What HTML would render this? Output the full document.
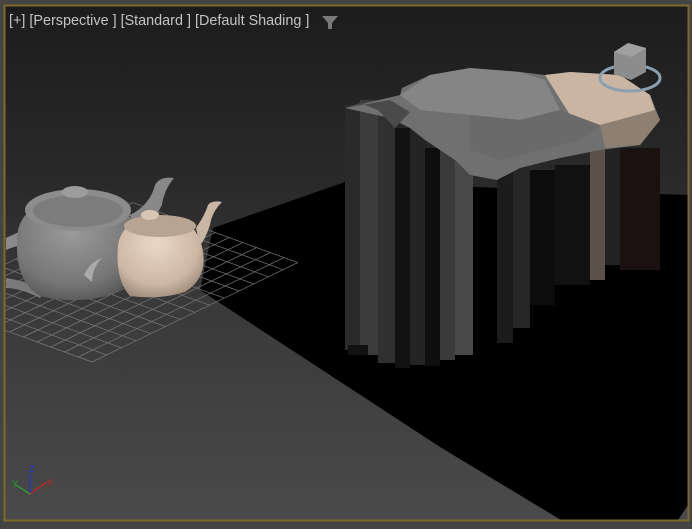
<!DOCTYPE html>
<html><head><meta charset="utf-8"><style>
html,body{margin:0;padding:0;background:#444;}
body{width:692px;height:529px;position:relative;overflow:hidden;font-family:"Liberation Sans",sans-serif;}
svg{position:absolute;left:0;top:0;}
.lbl{position:absolute;left:9px;top:13px;font-size:14.4px;color:#c4c4c4;white-space:pre;}
</style></head><body>
<svg width="692" height="529" viewBox="0 0 692 529">
<defs>
<linearGradient id="bg" x1="0" y1="0" x2="0" y2="1">
<stop offset="0" stop-color="#1c1c1c"/><stop offset="0.35" stop-color="#2a2a2a"/><stop offset="0.55" stop-color="#383838"/><stop offset="1" stop-color="#4a4a4a"/>
</linearGradient>
<radialGradient id="gt" cx="0.45" cy="0.35" r="0.7"><stop offset="0" stop-color="#9a9a9a"/><stop offset="0.7" stop-color="#777"/><stop offset="1" stop-color="#555"/></radialGradient>
<radialGradient id="bt" cx="0.45" cy="0.35" r="0.7"><stop offset="0" stop-color="#ead8c6"/><stop offset="0.7" stop-color="#cdb7a4"/><stop offset="1" stop-color="#9a8878"/></radialGradient>
</defs>
<rect x="0" y="0" width="692" height="529" fill="#444"/>
<rect x="4" y="5" width="685" height="516" fill="url(#bg)"/>
<polygon points="200,290 213,228 345,182 688,195 688,505 678,520 561,520 440,447" fill="#000"/>
<g transform="matrix(14.7,-7.1,-13.75,-5,92,362)" stroke="#777" stroke-width="0.7" fill="none">
<path vector-effect="non-scaling-stroke" d="M0 0H14M0 1H14M0 2H14M0 3H14M0 4H14M0 5H14M0 6H14M0 7H14M0 8H14M0 9H14M0 10H14M0 11H14M0 12H14M0 0V12M1 0V12M2 0V12M3 0V12M4 0V12M5 0V12M6 0V12M7 0V12M8 0V12M9 0V12M10 0V12M11 0V12M12 0V12M13 0V12M14 0V12"/>
</g>
<rect x="0" y="0" width="5" height="529" fill="#444"/>
<path d="M6 238 Q30 226 40 228 L40 242 Q20 244 6 250Z" fill="#8a8a8a"/>
<path d="M6 278 Q30 282 45 290 L40 298 Q20 288 6 288Z" fill="#7a7a7a"/>
<path d="M130 215 Q150 205 155 185 Q160 176 174 178 Q164 190 162 205 Q152 225 135 232Z" fill="#888"/>
<path d="M18 230 Q25 200 75 195 Q130 198 138 235 Q145 280 110 295 Q75 305 40 296 Q12 280 18 230Z" fill="url(#gt)"/>
<ellipse cx="78" cy="210" rx="53" ry="21" fill="#8c8c8c"/>
<ellipse cx="78" cy="211" rx="45" ry="16" fill="#7c7c7c"/>
<ellipse cx="75" cy="192" rx="13" ry="6" fill="#9c9c9c"/>
<path d="M84 275 Q90 262 102 258 Q92 268 92 282Z" fill="#aaa"/>
<path d="M196 228 Q205 215 208 205 Q212 200 222 202 Q212 212 210 225 Q205 240 200 245Z" fill="#c8b5a3"/>
<path d="M118 245 Q122 220 155 215 Q190 215 200 240 Q212 275 185 292 Q160 300 130 296 Q115 280 118 245Z" fill="url(#bt)"/>
<ellipse cx="160" cy="226" rx="36" ry="11" fill="#b8a492"/>
<ellipse cx="150" cy="215" rx="9" ry="5" fill="#d8c6b4"/>
<g>
<rect x="345" y="105" width="15" height="245" fill="#2a2a2a"/>
<rect x="360" y="100" width="18" height="255" fill="#3c3c3c"/>
<rect x="378" y="105" width="17" height="258" fill="#303030"/>
<rect x="395" y="128" width="15" height="240" fill="#121212"/>
<rect x="410" y="130" width="15" height="235" fill="#242424"/>
<rect x="425" y="148" width="15" height="218" fill="#0e0e0e"/>
<rect x="440" y="150" width="15" height="210" fill="#3a3a3a"/>
<rect x="455" y="160" width="18" height="195" fill="#484848"/>
<rect x="497" y="165" width="16" height="178" fill="#1c1c1c"/>
<rect x="513" y="168" width="17" height="160" fill="#262626"/>
<rect x="530" y="170" width="25" height="135" fill="#0c0c0c"/>
<rect x="555" y="165" width="35" height="120" fill="#111"/>
<rect x="590" y="140" width="15" height="140" fill="#5a5249"/>
<rect x="605" y="140" width="15" height="125" fill="#222"/>
<rect x="620" y="148" width="40" height="122" fill="#1a1111"/>
<rect x="348" y="345" width="20" height="10" fill="#111"/>
</g>
<polygon points="345,108 400,95 402,88 430,75 470,68 520,72 545,75 570,72 620,75 650,95 660,120 640,145 600,150 560,158 520,168 497,180 470,175 455,160 440,150 425,140 410,128 390,118" fill="#707070"/>
<polygon points="400,95 430,75 470,68 520,72 545,80 560,110 520,120 470,115 420,110" fill="#858585"/>
<polygon points="545,75 570,72 620,75 650,95 655,110 625,120 600,125 570,115" fill="#c9b5a1"/>
<polygon points="600,125 655,110 660,120 640,145 605,148" fill="#8e8070"/>
<polygon points="470,115 520,120 560,110 600,125 580,140 540,150 500,160 470,150" fill="#6a6a6a"/>
<polygon points="345,108 390,100 410,112 395,128 378,110 360,103" fill="#4a4a4a"/>
<ellipse cx="630" cy="78" rx="30" ry="13" fill="none" stroke="#8aa0b0" stroke-width="3"/>
<polygon points="614,52 628,43 646,48 646,72 631,80 614,74" fill="#8c8c8c"/>
<polygon points="614,52 628,43 646,48 632,57" fill="#a0a0a0"/>
<path d="M30 494V473" stroke="#2233dd" stroke-width="1.3"/>
<path d="M30 494L47 482" stroke="#cc2222" stroke-width="1.3"/>
<path d="M30 494L16 485" stroke="#22aa22" stroke-width="1.3"/>
<text x="29" y="472" font-size="9" fill="#2233dd" font-family="Liberation Sans">Z</text>
<text x="47" y="486" font-size="9" fill="#cc2222" font-family="Liberation Sans">X</text>
<text x="12" y="487" font-size="9" fill="#22aa22" font-family="Liberation Sans">Y</text>
<rect x="4.5" y="5.5" width="684" height="515" fill="none" stroke="#7d6a2e" stroke-width="2"/>
<path d="M322 16H338L332 23V29H328V23Z" fill="#7a7a7a"/>
</svg>
<div class="lbl">[+] [Perspective ] [Standard ] [Default Shading ]</div>
</body></html>
